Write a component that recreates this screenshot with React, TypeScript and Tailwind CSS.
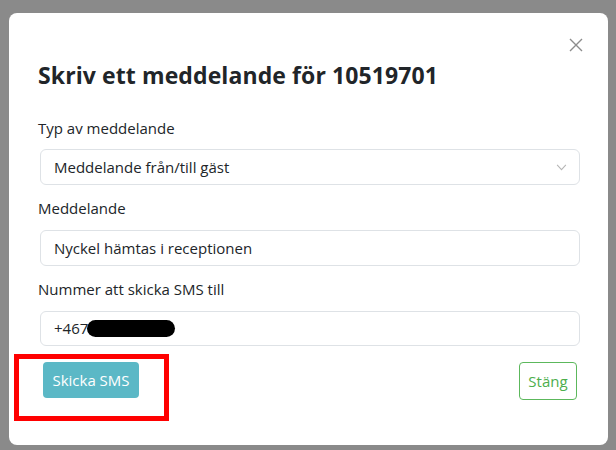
import React from 'react';

const fields = [
    { label: 'Meddelande', value: 'Nyckel hämtas i receptionen' },
];

const App: React.FC = () => {
    return (
        <div className="w-[616px] h-[450px] bg-[#8a8a8a] pt-[13px] pl-[9px] overflow-hidden relative font-['Open_Sans',sans-serif] text-[#212529]">
            {/* Modal */}
            <div className="relative w-[599px] h-[432px] bg-white rounded-[8px] pl-[31px] pr-[28px]">
                {/* Stäng-kryss */}
                <button className="absolute right-[24px] top-[24px] w-[16px] h-[16px] text-[#8c8c8c]">
                    <svg viewBox="0 0 16 16" width="16" height="16" fill="none" stroke="currentColor" strokeWidth="1.4">
                        <path d="M2 2 L14 14 M14 2 L2 14" />
                    </svg>
                </button>

                <h2 className="pt-[48px] -ml-[2px] text-[23px] leading-[28px] font-bold tracking-[0.1px]">
                    Skriv ett meddelande för 10519701
                </h2>

                <div className="mt-[27px] flex flex-col">
                    <label className="-ml-[2px] text-[15px] leading-[24px]">Typ av meddelande</label>
                    <div className="mt-[9px] h-[36px] border border-[#dee2e6] rounded-[6px] flex items-center justify-between pl-[13px] pr-[12px] text-[15px]">
                        <span>Meddelande från/till gäst</span>
                        <svg viewBox="0 0 12 8" width="11" height="7" fill="none" stroke="#b5b5b5" strokeWidth="1.2">
                            <path d="M1 1 L6 6.5 L11 1" />
                        </svg>
                    </div>

                    {fields.map((f) => (
                        <React.Fragment key={f.label}>
                            <label className="-ml-[2px] mt-[11px] text-[15px] leading-[24px]">{f.label}</label>
                            <div className="mt-[10px] h-[36px] border border-[#dee2e6] rounded-[6px] flex items-center pl-[13px] text-[15px]">
                                {f.value}
                            </div>
                        </React.Fragment>
                    ))}

                    <label className="-ml-[2px] mt-[11px] text-[15px] leading-[24px]">Nummer att skicka SMS till</label>
                    <div className="mt-[10px] h-[35px] border border-[#dee2e6] rounded-[6px] flex items-center pl-[13px] text-[15px]">
                        <span>+467</span>
                        {/* överstruket nummer */}
                        <span className="w-[88px] h-[17px] bg-black rounded-full -ml-[1px]"></span>
                    </div>

                    <div className="mt-[16px] flex items-start justify-between">
                        <button className="ml-[3px] w-[96px] h-[36px] bg-[#5bb8c6] text-white rounded-[4px] text-[15px]">
                            Skicka SMS
                        </button>
                        <button className="mr-[3px] w-[58px] h-[38px] border border-[#5cb85c] text-[#4cae4c] rounded-[4px] text-[15px]">
                            Stäng
                        </button>
                    </div>
                </div>
            </div>

            {/* Röd markering */}
            <div className="absolute left-[14px] top-[354px] w-[155px] h-[67px] border-[5px] border-[#ff0000]"></div>
        </div>
    );
};

export default App;
